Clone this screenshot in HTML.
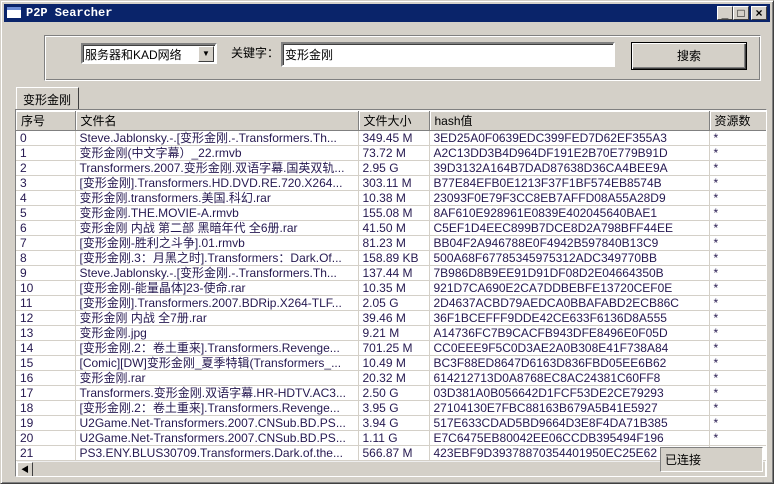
<!DOCTYPE html>
<html><head><meta charset="utf-8"><style>
*{box-sizing:border-box;margin:0;padding:0}
body{width:774px;height:484px;background:#d4d0c8;font:12px "Liberation Sans","Noto Sans CJK SC",sans-serif;color:#000;position:relative;overflow:hidden}
.a{position:absolute}
.win{left:0;top:0;width:774px;height:484px;border:1px solid;border-color:#d4d0c8 #404040 #404040 #d4d0c8;box-shadow:inset 1px 1px #fff,inset -1px -1px #808080}
.title{left:4px;top:4px;width:766px;height:18px;background:#0a246a;color:#fff;font:bold 12px "Liberation Mono",monospace;line-height:18px;padding-left:22px}
.ic{left:7px;top:7px;width:14px;height:11px;background:#fff;border-top:3px solid #6b8cd6}
.tb{top:6px;width:16px;height:14px;background:#d4d0c8;border:1px solid;border-color:#fff #404040 #404040 #fff;font:bold 12px "Liberation Sans";line-height:12px;text-align:center;color:#000}
.grp{left:44px;top:35px;width:717px;height:46px;border:1px solid;border-color:#808080 #fff #fff #808080;box-shadow:inset 1px 1px #fff,inset -1px -1px #808080}
.sunk{border:2px solid;border-color:#808080 #fff #fff #808080;background:#fff;box-shadow:inset 1px 1px #404040}
.btn{left:631px;top:42px;width:116px;height:28px;border:1px solid #000;background:#d4d0c8;box-shadow:inset 1px 1px #fff,inset -1px -1px #404040,inset -2px -2px #808080;text-align:center;line-height:26px}
.tab{left:16px;top:87px;width:63px;height:23px;border:1px solid;border-bottom:none;border-color:#fff #404040 #404040 #fff;padding:3px 0 0 6px;background:#d4d0c8}
.list{left:15px;top:109px;width:752px;height:368px;border:1px solid;border-color:#808080 #fff #fff #808080;background:#fff;overflow:hidden}
table{border-collapse:collapse;table-layout:fixed;position:absolute;left:0;top:1px;width:758px}
th{height:19px;background:#d4d0c8;font-weight:normal;text-align:left;padding-left:5px;border-right:1px solid #808080;border-bottom:1px solid #808080;box-shadow:inset 1px 1px #fff;white-space:nowrap;overflow:hidden}
td{height:15px;line-height:14px;padding-left:4px;border-right:1px solid #d4d0c8;border-bottom:1px solid #d4d0c8;white-space:nowrap;overflow:hidden;color:#251850}
.hs{left:1px;top:351px;width:748px;height:16px;background:#d4d0c8;border-top:1px solid #eee}
.sb{left:0;top:0;width:16px;height:16px;border:1px solid;border-color:#fff #404040 #404040 #fff;font-size:8px;text-align:center;line-height:14px}
.st{left:660px;top:447px;width:103px;height:25px;border:1px solid;border-color:#808080 #fff #fff #808080;background:#d4d0c8;padding:3px 0 0 4px}
</style></head><body>
<div class="a win"></div>
<div class="a title">P2P Searcher</div><div class="a ic"></div>
<div class="a tb" style="left:717px">_</div><div class="a tb" style="left:733px">□</div><div class="a tb" style="left:751px">×</div>
<div class="a grp"></div>
<div class="a sunk" style="left:81px;top:43px;width:136px;height:21px;padding:1px 0 0 2px">服务器和KAD网络
 <div class="a" style="right:1px;top:1px;width:16px;height:16px;background:#d4d0c8;border:1px solid;border-color:#fff #404040 #404040 #fff;font-size:8px;text-align:center;line-height:14px">▼</div></div>
<div class="a" style="left:231px;top:44px">关键字：</div>
<div class="a sunk" style="left:281px;top:42px;width:334px;height:25px;padding:2px 0 0 2px">变形金刚</div>
<div class="a btn">搜索</div>
<div class="a tab">变形金刚</div>
<div class="a list">
<table>
<colgroup><col style="width:59px"><col style="width:283px"><col style="width:71px"><col style="width:280px"><col style="width:65px"></colgroup>
<tr><th>序号</th><th>文件名</th><th>文件大小</th><th>hash值</th><th>资源数</th></tr>
<tr><td>0</td><td>Steve.Jablonsky.-.[变形金刚.-.Transformers.Th...</td><td>349.45 M</td><td>3ED25A0F0639EDC399FED7D62EF355A3</td><td>*</td></tr>
<tr><td>1</td><td>变形金刚(中文字幕）_22.rmvb</td><td>73.72 M</td><td>A2C13DD3B4D964DF191E2B70E779B91D</td><td>*</td></tr>
<tr><td>2</td><td>Transformers.2007.变形金刚.双语字幕.国英双轨...</td><td>2.95 G</td><td>39D3132A164B7DAD87638D36CA4BEE9A</td><td>*</td></tr>
<tr><td>3</td><td>[变形金刚].Transformers.HD.DVD.RE.720.X264...</td><td>303.11 M</td><td>B77E84EFB0E1213F37F1BF574EB8574B</td><td>*</td></tr>
<tr><td>4</td><td>变形金刚.transformers.美国.科幻.rar</td><td>10.38 M</td><td>23093F0E79F3CC8EB7AFFD08A55A28D9</td><td>*</td></tr>
<tr><td>5</td><td>变形金刚.THE.MOVIE-A.rmvb</td><td>155.08 M</td><td>8AF610E928961E0839E402045640BAE1</td><td>*</td></tr>
<tr><td>6</td><td>变形金刚 内战 第二部 黑暗年代 全6册.rar</td><td>41.50 M</td><td>C5EF1D4EEC899B7DCE8D2A798BFF44EE</td><td>*</td></tr>
<tr><td>7</td><td>[变形金刚-胜利之斗争].01.rmvb</td><td>81.23 M</td><td>BB04F2A946788E0F4942B597840B13C9</td><td>*</td></tr>
<tr><td>8</td><td>[变形金刚.3：月黑之时].Transformers：Dark.Of...</td><td>158.89 KB</td><td>500A68F67785345975312ADC349770BB</td><td>*</td></tr>
<tr><td>9</td><td>Steve.Jablonsky.-.[变形金刚.-.Transformers.Th...</td><td>137.44 M</td><td>7B986D8B9EE91D91DF08D2E04664350B</td><td>*</td></tr>
<tr><td>10</td><td>[变形金刚-能量晶体]23-使命.rar</td><td>10.35 M</td><td>921D7CA690E2CA7DDBEBFE13720CEF0E</td><td>*</td></tr>
<tr><td>11</td><td>[变形金刚].Transformers.2007.BDRip.X264-TLF...</td><td>2.05 G</td><td>2D4637ACBD79AEDCA0BBAFABD2ECB86C</td><td>*</td></tr>
<tr><td>12</td><td>变形金刚 内战 全7册.rar</td><td>39.46 M</td><td>36F1BCEFFF9DDE42CE633F6136D8A555</td><td>*</td></tr>
<tr><td>13</td><td>变形金刚.jpg</td><td>9.21 M</td><td>A14736FC7B9CACFB943DFE8496E0F05D</td><td>*</td></tr>
<tr><td>14</td><td>[变形金刚.2：卷土重来].Transformers.Revenge...</td><td>701.25 M</td><td>CC0EEE9F5C0D3AE2A0B308E41F738A84</td><td>*</td></tr>
<tr><td>15</td><td>[Comic][DW]变形金刚_夏季特辑(Transformers_...</td><td>10.49 M</td><td>BC3F88ED8647D6163D836FBD05EE6B62</td><td>*</td></tr>
<tr><td>16</td><td>变形金刚.rar</td><td>20.32 M</td><td>614212713D0A8768EC8AC24381C60FF8</td><td>*</td></tr>
<tr><td>17</td><td>Transformers.变形金刚.双语字幕.HR-HDTV.AC3...</td><td>2.50 G</td><td>03D381A0B056642D1FCF53DE2CE79293</td><td>*</td></tr>
<tr><td>18</td><td>[变形金刚.2：卷土重来].Transformers.Revenge...</td><td>3.95 G</td><td>27104130E7FBC88163B679A5B41E5927</td><td>*</td></tr>
<tr><td>19</td><td>U2Game.Net-Transformers.2007.CNSub.BD.PS...</td><td>3.94 G</td><td>517E633CDAD5BD9664D3E8F4DA71B385</td><td>*</td></tr>
<tr><td>20</td><td>U2Game.Net-Transformers.2007.CNSub.BD.PS...</td><td>1.11 G</td><td>E7C6475EB80042EE06CCDB395494F196</td><td>*</td></tr>
<tr><td>21</td><td>PS3.ENY.BLUS30709.Transformers.Dark.of.the...</td><td>566.87 M</td><td>423EBF9D39378870354401950EC25E62</td><td>*</td></tr>
</table>
<div class="a hs"><div class="a sb">◀</div></div>
</div>
<div class="a st">已连接</div>
</body></html>
